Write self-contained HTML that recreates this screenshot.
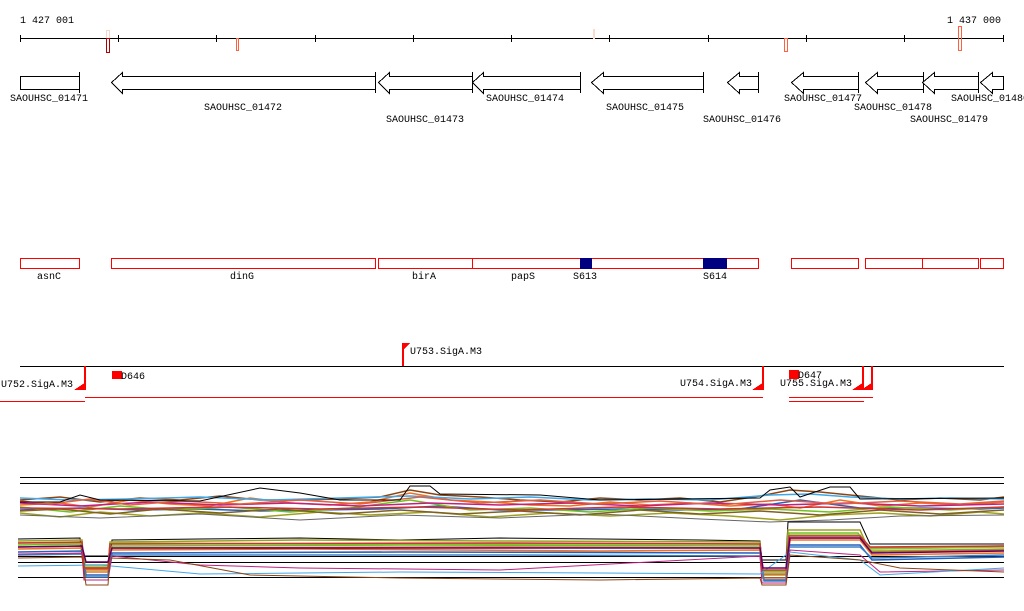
<!DOCTYPE html>
<html><head><meta charset="utf-8"><style>
html,body{margin:0;padding:0;background:#fff;width:1024px;height:611px;overflow:hidden}
svg{display:block}
text{font-family:"Liberation Mono","DejaVu Sans Mono",monospace;font-size:10px;fill:#000}
</style></head><body>
<svg width="1024" height="611" viewBox="0 0 1024 611" xmlns="http://www.w3.org/2000/svg" shape-rendering="crispEdges">
<text x="20" y="23">1 427 001</text>
<text x="947" y="23">1 437 000</text>
<line x1="20" y1="38.5" x2="1004" y2="38.5" stroke="#000"/>
<g stroke="#000">
<line x1="20.5" y1="35" x2="20.5" y2="42"/><line x1="118.5" y1="35" x2="118.5" y2="42"/><line x1="216.5" y1="35" x2="216.5" y2="42"/><line x1="315.5" y1="35" x2="315.5" y2="42"/><line x1="413.5" y1="35" x2="413.5" y2="42"/><line x1="511.5" y1="35" x2="511.5" y2="42"/><line x1="609.5" y1="35" x2="609.5" y2="42"/><line x1="708.5" y1="35" x2="708.5" y2="42"/><line x1="806.5" y1="35" x2="806.5" y2="42"/><line x1="904.5" y1="35" x2="904.5" y2="42"/><line x1="1003.5" y1="35" x2="1003.5" y2="42"/>
</g>
<rect x="106.5" y="30.5" width="3" height="8" fill="none" stroke="#f5d5c8"/>
<rect x="106.5" y="38.5" width="3" height="14" fill="none" stroke="#b00000"/>
<rect x="236.5" y="38.5" width="2" height="12" fill="none" stroke="#ff6040"/>
<rect x="593" y="29" width="2" height="10" fill="#fadccc"/>
<rect x="784.5" y="38.5" width="3" height="13" fill="none" stroke="#ff6040"/>
<rect x="958.5" y="26.5" width="3" height="24" fill="none" stroke="#ff6040"/>
<g fill="#fff" stroke="#000">
<rect x="20.5" y="76.5" width="59" height="13"/>
<line x1="79.5" y1="72" x2="79.5" y2="93"/>
<polygon points="111.5,82.5 122.5,72.5 122.5,76.5 375.5,76.5 375.5,89.5 122.5,89.5 122.5,93.5"/>
<line x1="375.5" y1="72" x2="375.5" y2="93"/>
<polygon points="378.5,82.5 389.5,72.5 389.5,76.5 472.5,76.5 472.5,89.5 389.5,89.5 389.5,93.5"/>
<line x1="472.5" y1="72" x2="472.5" y2="93"/>
<polygon points="472.5,82.5 483.5,72.5 483.5,76.5 580.5,76.5 580.5,89.5 483.5,89.5 483.5,93.5"/>
<line x1="580.5" y1="72" x2="580.5" y2="93"/>
<polygon points="591.5,82.5 603.5,72.5 603.5,76.5 703.5,76.5 703.5,89.5 603.5,89.5 603.5,93.5"/>
<line x1="703.5" y1="72" x2="703.5" y2="93"/>
<polygon points="727.5,82.5 739.5,72.5 739.5,76.5 758.5,76.5 758.5,89.5 739.5,89.5 739.5,93.5"/>
<line x1="758.5" y1="72" x2="758.5" y2="93"/>
<polygon points="791.5,82.5 803.5,72.5 803.5,76.5 858.5,76.5 858.5,89.5 803.5,89.5 803.5,93.5"/>
<line x1="858.5" y1="72" x2="858.5" y2="93"/>
<polygon points="865.5,82.5 877.5,72.5 877.5,76.5 923.5,76.5 923.5,89.5 877.5,89.5 877.5,93.5"/>
<line x1="923.5" y1="72" x2="923.5" y2="93"/>
<polygon points="922.5,82.5 934.5,72.5 934.5,76.5 978.5,76.5 978.5,89.5 934.5,89.5 934.5,93.5"/>
<line x1="978.5" y1="72" x2="978.5" y2="93"/>
<polygon points="980.5,82.5 992.5,72.5 992.5,76.5 1003.5,76.5 1003.5,89.5 992.5,89.5 992.5,93.5"/>
</g>
<text x="10" y="101">SAOUHSC_01471</text>
<text x="204" y="110">SAOUHSC_01472</text>
<text x="386" y="122">SAOUHSC_01473</text>
<text x="486" y="101">SAOUHSC_01474</text>
<text x="606" y="110">SAOUHSC_01475</text>
<text x="703" y="122">SAOUHSC_01476</text>
<text x="784" y="101">SAOUHSC_01477</text>
<text x="854" y="110">SAOUHSC_01478</text>
<text x="910" y="122">SAOUHSC_01479</text>
<text x="951" y="101">SAOUHSC_01480</text>
<g fill="#fff" stroke="#ff0000">
<rect x="20.5" y="258.5" width="59" height="10"/>
<rect x="111.5" y="258.5" width="264" height="10"/>
<rect x="378.5" y="258.5" width="94" height="10"/>
<rect x="472.5" y="258.5" width="286" height="10"/>
<rect x="791.5" y="258.5" width="67" height="10"/>
<rect x="865.5" y="258.5" width="57" height="10"/>
<rect x="922.5" y="258.5" width="56" height="10"/>
<rect x="980.5" y="258.5" width="23" height="10"/>
</g>
<rect x="580" y="258" width="12" height="11" fill="#000080"/>
<rect x="703" y="258" width="24" height="11" fill="#000080"/>
<text x="37" y="279">asnC</text>
<text x="230" y="279">dinG</text>
<text x="412" y="279">birA</text>
<text x="511" y="279">papS</text>
<text x="573" y="279">S613</text>
<text x="703" y="279">S614</text>
<line x1="20" y1="366.5" x2="1004" y2="366.5" stroke="#000"/>
<line x1="85" y1="397.5" x2="763" y2="397.5" stroke="#ff0000"/>
<line x1="0" y1="401.5" x2="85" y2="401.5" stroke="#ff0000"/>
<line x1="789" y1="397.5" x2="873" y2="397.5" stroke="#ff0000"/>
<line x1="789" y1="401.5" x2="864" y2="401.5" stroke="#ff0000"/>
<g fill="#ff0000">
<polygon points="402,343 410,343 404,349 404,366 402,366"/>
<rect x="84" y="366" width="2" height="24"/><rect x="74" y="383" width="12" height="7" fill="none"/><polygon points="74,390 86,390 86,382"/>
<rect x="762" y="366" width="2" height="24"/><polygon points="752,390 764,390 764,382"/>
<rect x="862" y="366" width="2" height="24"/><polygon points="852,390 864,390 864,382"/>
<rect x="871" y="366" width="2" height="24"/><polygon points="861,390 873,390 873,382"/>
<rect x="112" y="371" width="10" height="8"/>
<rect x="789" y="370" width="10" height="9"/>
</g>
<text x="410" y="354">U753.SigA.M3</text>
<text x="1" y="387">U752.SigA.M3</text>
<text x="121" y="379">D646</text>
<text x="680" y="386">U754.SigA.M3</text>
<text x="798" y="378">D647</text>
<text x="780" y="386">U755.SigA.M3</text>
<g stroke="#000">
<line x1="20" y1="477.5" x2="1004" y2="477.5"/>
<line x1="20" y1="483.5" x2="1004" y2="483.5"/>
<line x1="18" y1="556.5" x2="1004" y2="556.5"/>
<line x1="18" y1="562.5" x2="1004" y2="562.5"/>
<line x1="18" y1="577.5" x2="1004" y2="577.5"/>
</g>
<g fill="none" stroke-width="1.5" shape-rendering="auto">
<polyline stroke="#8b4513" points="20,500 60,497 100,502 140,498 180,500 220,496 260,500 300,500 340,499 380,497 410,490 440,495 480,497 520,500 560,502 600,498 640,500 680,498 720,502 760,496 790,490 820,492 860,496 900,500 940,498 980,500 1004,497"/>
<polyline stroke="#f07020" points="20,505 60,503 90,507 130,500 170,504 210,506 250,498 290,503 330,505 370,502 410,493 450,500 490,502 530,505 570,506 610,502 650,505 690,503 730,506 770,504 800,508 840,500 880,506 920,503 960,505 1004,502"/>
<polyline stroke="#2060c0" points="20,510 80,508 140,510 200,509 260,511 320,510 380,509 440,506 500,510 560,510 620,509 680,510 740,509 800,500 860,508 920,508 980,509 1004,508"/>
<polyline stroke="#70c020" points="20,507 70,512 120,506 170,510 230,507 290,512 350,508 410,500 470,510 530,508 590,512 650,508 710,511 770,509 830,512 890,507 950,510 1004,507"/>
<polyline stroke="#40a8e8" points="20,498 70,500 130,499 200,497 270,500 340,498 410,496 470,499 530,497 590,500 650,499 710,500 770,495 810,494 850,497 900,499 950,498 1004,499"/>
<polyline stroke="#a0a020" points="20,513 60,517 100,512 150,516 200,513 260,517 320,512 370,515 430,512 490,517 550,513 610,516 670,513 730,516 780,520 830,515 880,513 930,516 980,512 1004,514"/>
<polyline stroke="#c02080" points="20,503 80,506 150,502 220,505 290,503 360,506 430,503 500,505 570,503 640,506 710,503 780,505 850,503 920,506 1004,504"/>
<polyline stroke="#e06040" points="20,501 50,504 90,499 130,505 180,501 240,504 300,500 360,504 420,497 480,503 540,500 600,504 660,501 720,505 780,500 840,504 900,501 960,504 1004,501"/>
<polyline stroke="#806020" points="20,511 60,509 110,514 160,509 220,513 280,509 340,514 400,510 460,514 520,511 580,515 640,510 700,514 760,511 820,515 880,510 940,514 1004,510"/>
<polyline stroke="#000" stroke-width="1" points="20,502 60,502 80,495 100,500 200,501 260,488 300,493 340,500 400,500 410,486 430,486 440,494 540,495 600,500 760,498 770,490 790,487 800,497 830,487 850,487 860,499 1004,498"/>
<polyline stroke="#cc3333" points="20,508 120,509 220,507 320,509 420,507 520,510 620,507 720,509 820,507 920,510 1004,507"/>
<polyline stroke="#666" stroke-width="1" points="20,515 100,518 200,514 300,520 400,515 500,518 600,514 700,519 770,522 830,520 900,516 1004,515"/>
<polyline stroke="#000" stroke-width="1" points="18,539 80,538 82,556 110,556 112,540 200,539 300,538 400,540 500,538 600,539 700,540 760,541 762,560 786,560 788,522 860,522 870,544 1004,544"/>
<polyline stroke="#a0a020" points="18,541 82,540 84,570 108,570 110,542 300,540 500,541 760,542 762,575 786,575 788,530 860,530 868,548 1004,546"/>
<polyline stroke="#70c020" points="18,545 82,544 85,565 108,565 112,546 400,545 760,546 763,572 786,572 789,533 858,533 870,551 1004,549"/>
<polyline stroke="#f07020" points="18,549 82,548 84,572 108,572 110,550 300,549 600,551 760,550 762,578 786,578 790,540 860,540 872,555 1004,553"/>
<polyline stroke="#2060c0" points="18,552 82,551 86,575 108,575 112,553 400,552 760,553 764,580 786,580 789,545 860,545 872,560 1004,557"/>
<polyline stroke="#e06040" points="18,547 82,546 84,569 108,569 110,548 500,547 760,548 762,574 786,574 789,538 860,538 872,552 1004,550"/>
<polyline stroke="#90c030" points="18,543 82,543 84,567 108,567 110,543 500,544 760,544 762,571 786,571 789,535 860,535 870,549 1004,547"/>
<polyline stroke="#4080c0" points="18,555 82,554 86,577 108,577 112,555 500,555 760,556 764,581 786,581 789,547 860,547 872,558 1004,555"/>
<polyline stroke="#c02080" stroke-width="1" points="18,554 82,553 84,580 108,580 112,556 200,565 300,568 500,570 760,556 762,583 786,583 790,550 860,555 880,572 1004,570"/>
<polyline stroke="#40a8e8" stroke-width="1" points="18,566 100,565 200,574 400,572 600,573 760,574 790,552 860,560 880,575 1004,568"/>
<polyline stroke="#8b4513" stroke-width="1" points="18,558 82,557 86,585 108,585 110,558 170,560 250,575 400,578 600,580 760,578 762,585 786,585 790,555 860,560 900,568 1004,572"/>
<polyline stroke="#cc3333" points="18,543 82,542 84,568 108,568 110,544 500,543 760,544 762,570 786,570 789,536 860,536 870,547 1004,546"/>
<polyline stroke="#600060" points="18,547 82,546 86,562 108,562 112,548 760,548 763,568 786,568 790,538 860,538 872,553 1004,551"/>
</g>
</svg>
</body></html>
